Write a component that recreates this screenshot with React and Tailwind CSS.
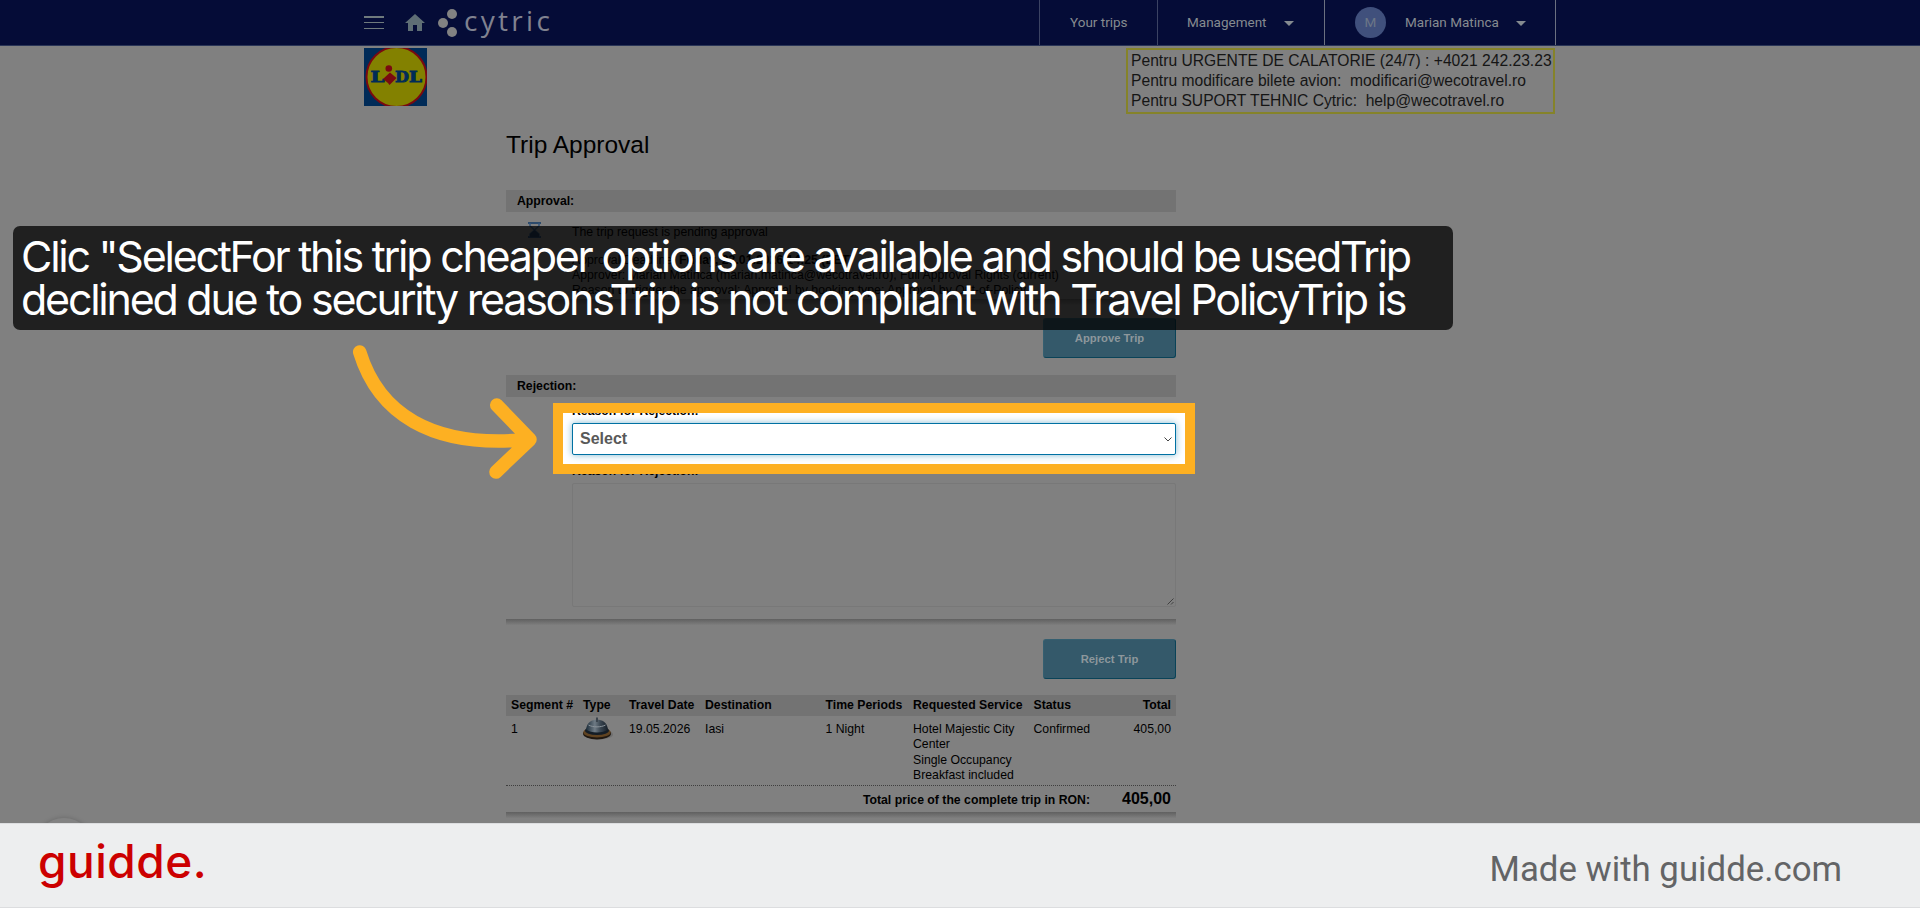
import React from "react";
import { MdHome, MdArrowDropDown } from "react-icons/md";

const columns =
  "grid grid-cols-[72px_46px_76px_120.5px_87.5px_120.5px_80px_1fr] pl-[5px] pr-[5px]";

const Navbar = () => {
  return (
    <header className="h-[46px] bg-[#050c37] border-b border-[#2a3557] flex justify-center">
      <div className="w-[1192px] flex justify-between">
        <div className="flex items-start">
          <div className="w-5 h-[13px] mt-4 flex flex-col justify-between">
            <span className="h-[1.5px] bg-[#6f7a7d]" />
            <span className="h-[1.5px] bg-[#6f7a7d]" />
            <span className="h-[1.5px] bg-[#6f7a7d]" />
          </div>
          <MdHome className="w-6 h-6 ml-[19px] mt-[11px] text-[#5f6e75]" />
          <svg className="w-5 h-8 ml-[11px] mt-[7px]" viewBox="0 0 20 32">
            <circle cx="14" cy="7" r="5" fill="#828282" />
            <circle cx="5" cy="16" r="5" fill="#828282" />
            <circle cx="14" cy="25" r="5" fill="#828282" />
          </svg>
          <span className="ml-[6px] h-[45px] leading-[40px] text-[28px] tracking-[3.3px] text-[#808290] font-['Open_Sans',sans-serif]">
            cytric
          </span>
        </div>

        <nav className="flex text-sm leading-[45px] text-[#858b90] font-[Roboto,sans-serif]">
          <div className="w-[118px] border-l border-[#3b4363] pl-[30px] text-[13.5px]">
            Your trips
          </div>
          <div className="w-[167px] border-l border-[#3b4363] pl-[29px] flex items-center text-[13.5px]">
            Management
            <MdArrowDropDown className="w-6 h-6 ml-[10px]" />
          </div>
          <div className="w-[232px] border-x border-[#6b7080] pl-[30px] flex items-center text-[13.5px]">
            <span className="w-[31px] h-[31px] mr-[19px] rounded-full bg-[#40507c] text-[#6c7687] text-center leading-[31px]">
              M
            </span>
            Marian Matinca
            <MdArrowDropDown className="w-6 h-6 ml-[10px]" />
          </div>
        </nav>
      </div>
    </header>
  );
};

const LidlLogo = () => {
  return (
    <svg className="w-[63px] h-[58px]" viewBox="0 0 63 58">
      <rect width="63" height="58" fill="#002b58" />
      <circle cx="32.5" cy="29" r="30" fill="#838100" stroke="#7a0a10" strokeWidth="2" />
      <g
        fill="#002b58"
        stroke="#002b58"
        strokeWidth="0.8"
        fontFamily="DejaVu Serif, serif"
        fontWeight="700"
        fontSize="15"
      >
        <text x="6.5" y="34.3" textLength="14" lengthAdjust="spacingAndGlyphs">L</text>
        <text x="31" y="34.3" textLength="14" lengthAdjust="spacingAndGlyphs">D</text>
        <text x="45" y="34.3" textLength="13" lengthAdjust="spacingAndGlyphs">L</text>
      </g>
      <circle cx="24.8" cy="20.5" r="3.3" fill="#7a0a10" />
      <path d="M19 31 L26 24.5 L32.5 30 L25.5 37 L24 35 Z" fill="#7a0a10" />
    </svg>
  );
};

const Bell = () => {
  return (
    <svg className="w-[30px] h-[23px]" viewBox="0 0 30 23">
      <defs>
        <linearGradient id="dome" x1="0" x2="1">
          <stop offset="0" stopColor="#1b2b38" />
          <stop offset="0.4" stopColor="#6f7b85" />
          <stop offset="0.65" stopColor="#3b4752" />
          <stop offset="1" stopColor="#161e28" />
        </linearGradient>
      </defs>
      <ellipse cx="16" cy="17.5" rx="14" ry="5" fill="#6f6f6f" />
      <ellipse cx="14" cy="16.8" rx="14" ry="5.6" fill="#1f1710" />
      <ellipse cx="14" cy="15.4" rx="13.6" ry="5" fill="#604321" />
      <ellipse cx="14" cy="13.6" rx="12" ry="4.4" fill="#141d26" />
      <path d="M3 12.5 C4 5 9 2.8 14 2.8 S24 5 25 12.5 C20 16.5 8 16.5 3 12.5Z" fill="url(#dome)" />
      <path d="M5.5 8 C10 10.5 18 10.5 22.5 8" stroke="#8b949b" strokeWidth="1" fill="none" />
      <rect x="13" y="0.5" width="2" height="4.5" fill="#3c454e" />
    </svg>
  );
};

const SectionBar = ({ children }) => {
  return (
    <h2 className="h-[22px] pl-[11px] leading-[23px] font-bold bg-[#737373]">
      {children}
    </h2>
  );
};

const ActionButton = ({ children }) => {
  return (
    <button className="block ml-auto w-[133px] h-10 rounded-[3px] border border-[#355f70] border-r-[#0a4358] border-b-[#0a4358] bg-[#34596a] text-[#8d979c] text-[11.25px] font-bold">
      {children}
    </button>
  );
};

const Divider = () => {
  return <div className="h-[6px] bg-linear-to-b from-[#606060] to-[#7e7e7e]" />;
};

const Approval = () => {
  return (
    <section className="h-[185px]">
      <SectionBar>Approval:</SectionBar>
      <div className="flex h-[87px] leading-[15.3px]">
        <div className="w-[66px] pt-[10px] pl-[22px]">
          <svg className="w-[13px] h-4" viewBox="0 0 13 16">
            <path d="M0 1H13M0 15H13" stroke="#2c4a6b" strokeWidth="2" />
            <path d="M2 1V4L6.5 8L2 12V15M11 1V4L6.5 8L11 12V15" stroke="#36567a" strokeWidth="1.5" fill="none" />
            <path d="M2 15V12L6.5 8L11 12V15Z" fill="#203a58" />
          </svg>
        </div>
        <div className="pt-[12.5px] whitespace-nowrap text-[12.28px]">
          <p>The trip request is pending approval</p>
          <p className="mt-[13px]">
            Approval Deadline: <b>Friday, 23.01.2026 14:25 (EET)</b>
          </p>
          <p>
            Approver: Marian Matinca (marian.matinca@wecotravel.ro), Full
            Approval Rights (current)
          </p>
          <p>
            Reason to trigger the approval: Approval by booking type; Approval
            by Out-of-Policy
          </p>
        </div>
      </div>
      <Divider />
      <div className="mt-[13px]">
        <ActionButton>Approve Trip</ActionButton>
      </div>
    </section>
  );
};

const Rejection = () => {
  return (
    <section className="h-[320px]">
      <SectionBar>Rejection:</SectionBar>
      <div className="ml-[66px] pt-[6px]">
        <div className="relative isolate">
          <div className="absolute -z-10 left-[-9px] top-[10px] w-[622px] h-[51px] bg-white" />
          <label className="block h-5 leading-[17px] font-bold">
            Reason for Rejection:
          </label>
          <div className="w-[604px] h-8 pl-[7px] pr-[3px] flex items-center justify-between bg-white border border-[#0071a3] rounded-[2px] shadow-[0_0_7px_rgba(10,119,168,0.5)] text-base font-bold text-[#595959]">
            Select
            <svg className="w-2 h-[5px]" viewBox="0 0 8 5">
              <path d="M0.5 0.5L4 4L7.5 0.5" stroke="#444" fill="none" />
            </svg>
          </div>
          <label className="block h-7 pt-2 leading-[17px] font-bold">
            Reason for Rejection:
          </label>
          <div className="absolute left-[-19px] top-0 w-[642px] h-[71px] border-[10px] border-[#fdb022]" />
        </div>
        <div className="relative w-[604px] h-[124px] border border-[#787878] rounded-[2px]">
          <svg className="absolute right-px bottom-px w-[7px] h-[7px]" viewBox="0 0 7 7">
            <path d="M0.5 6.5L6.5 0.5M4 6.5L6.5 4" stroke="#303030" strokeWidth="0.8" />
          </svg>
        </div>
      </div>
      <div className="mt-[12px]">
        <Divider />
      </div>
      <div className="mt-[14px]">
        <ActionButton>Reject Trip</ActionButton>
      </div>
    </section>
  );
};

const TripTable = () => {
  return (
    <section>
      <div className={`${columns} h-[21px] leading-[21px] font-bold bg-[#737373] whitespace-nowrap`}>
        <span>Segment #</span>
        <span>Type</span>
        <span>Travel Date</span>
        <span>Destination</span>
        <span>Time Periods</span>
        <span>Requested Service</span>
        <span>Status</span>
        <span className="text-right">Total</span>
      </div>
      <div className={`${columns} h-[70px] pt-[6px] leading-[15.3px] border-b border-dotted border-[#3f3f3f]`}>
        <span>1</span>
        <span className="-mt-[5px]">
          <Bell />
        </span>
        <span>19.05.2026</span>
        <span>Iasi</span>
        <span>1 Night</span>
        <span className="whitespace-nowrap">
          Hotel Majestic City
          <br />
          Center
          <br />
          Single Occupancy
          <br />
          Breakfast included
        </span>
        <span>Confirmed</span>
        <span className="text-right">405,00</span>
      </div>
      <div className="h-[26px] pr-[5px] flex justify-end items-center font-bold">
        <span className="pt-0.5">Total price of the complete trip in RON:</span>
        <span className="w-[81px] text-right text-base">405,00</span>
      </div>
      <Divider />
    </section>
  );
};

const Footer = () => {
  return (
    <footer className="absolute inset-x-0 bottom-0 h-[85px] pl-[38px] pr-[78px] flex justify-between bg-[#edeeef] border-y border-[#dcdddf]">
      <span className="leading-[75px] text-[46px] tracking-[0.5px] font-medium text-[#cc0000] font-[Inter,sans-serif]">
        guidde.
      </span>
      <span className="leading-[90px] text-[34.8px] text-[#636466] font-[Roboto,sans-serif]">
        Made with guidde.com
      </span>
    </footer>
  );
};

const App = () => {
  return (
    <div className="relative w-[1920px] h-[908px] overflow-hidden bg-[#808080] text-black text-[12.25px] font-['Liberation_Sans',sans-serif]">
      <Navbar />
      <div className="w-[1192px] h-[68px] mx-auto pt-0.5 flex justify-between">
        <LidlLogo />
        <div className="w-[429px] h-[66px] mr-px pl-[3px] pt-px border-2 border-[#85832a] text-[15.65px] leading-[20px] whitespace-pre text-[#151515]">
          <p>Pentru URGENTE DE CALATORIE (24/7) : +4021 242.23.23</p>
          <p>Pentru modificare bilete avion:  modificari@wecotravel.ro</p>
          <p>Pentru SUPORT TEHNIC Cytric:  help@wecotravel.ro</p>
        </div>
      </div>

      <main className="ml-[506px] w-[670px]">
        <h1 className="h-[76px] pt-[15px] text-[24.5px] leading-[32px]">Trip Approval</h1>
        <Approval />
        <Rejection />
        <TripTable />
      </main>

      <div className="absolute left-[34px] top-[818px] w-[60px] h-[60px] rounded-full bg-[#828282] shadow-[0_0_5px_rgba(0,0,0,0.2)]" />
      <Footer />

      <div className="absolute left-[13px] top-[226px] w-[1440px] h-[104px] pl-[8px] pt-[9px] rounded-[7px] bg-black/75 text-white text-[43px] leading-[43px] tracking-[-2.26px] whitespace-nowrap font-[Inter,sans-serif]">
        <p>Clic "SelectFor this trip cheaper options are available and should be usedTrip</p>
        <p>declined due to security reasonsTrip is not compliant with Travel PolicyTrip is</p>
      </div>

      <svg className="absolute left-[350px] top-[340px] w-[190px] h-[142px]" viewBox="350 340 190 142">
        <path
          d="M359.7 352C378 412 430 449 528 439.5M496.7 405L530 439.5L496 472"
          fill="none"
          stroke="#fdb022"
          strokeWidth="13.5"
          strokeLinecap="round"
          strokeLinejoin="round"
        />
      </svg>
    </div>
  );
};

export default App;
